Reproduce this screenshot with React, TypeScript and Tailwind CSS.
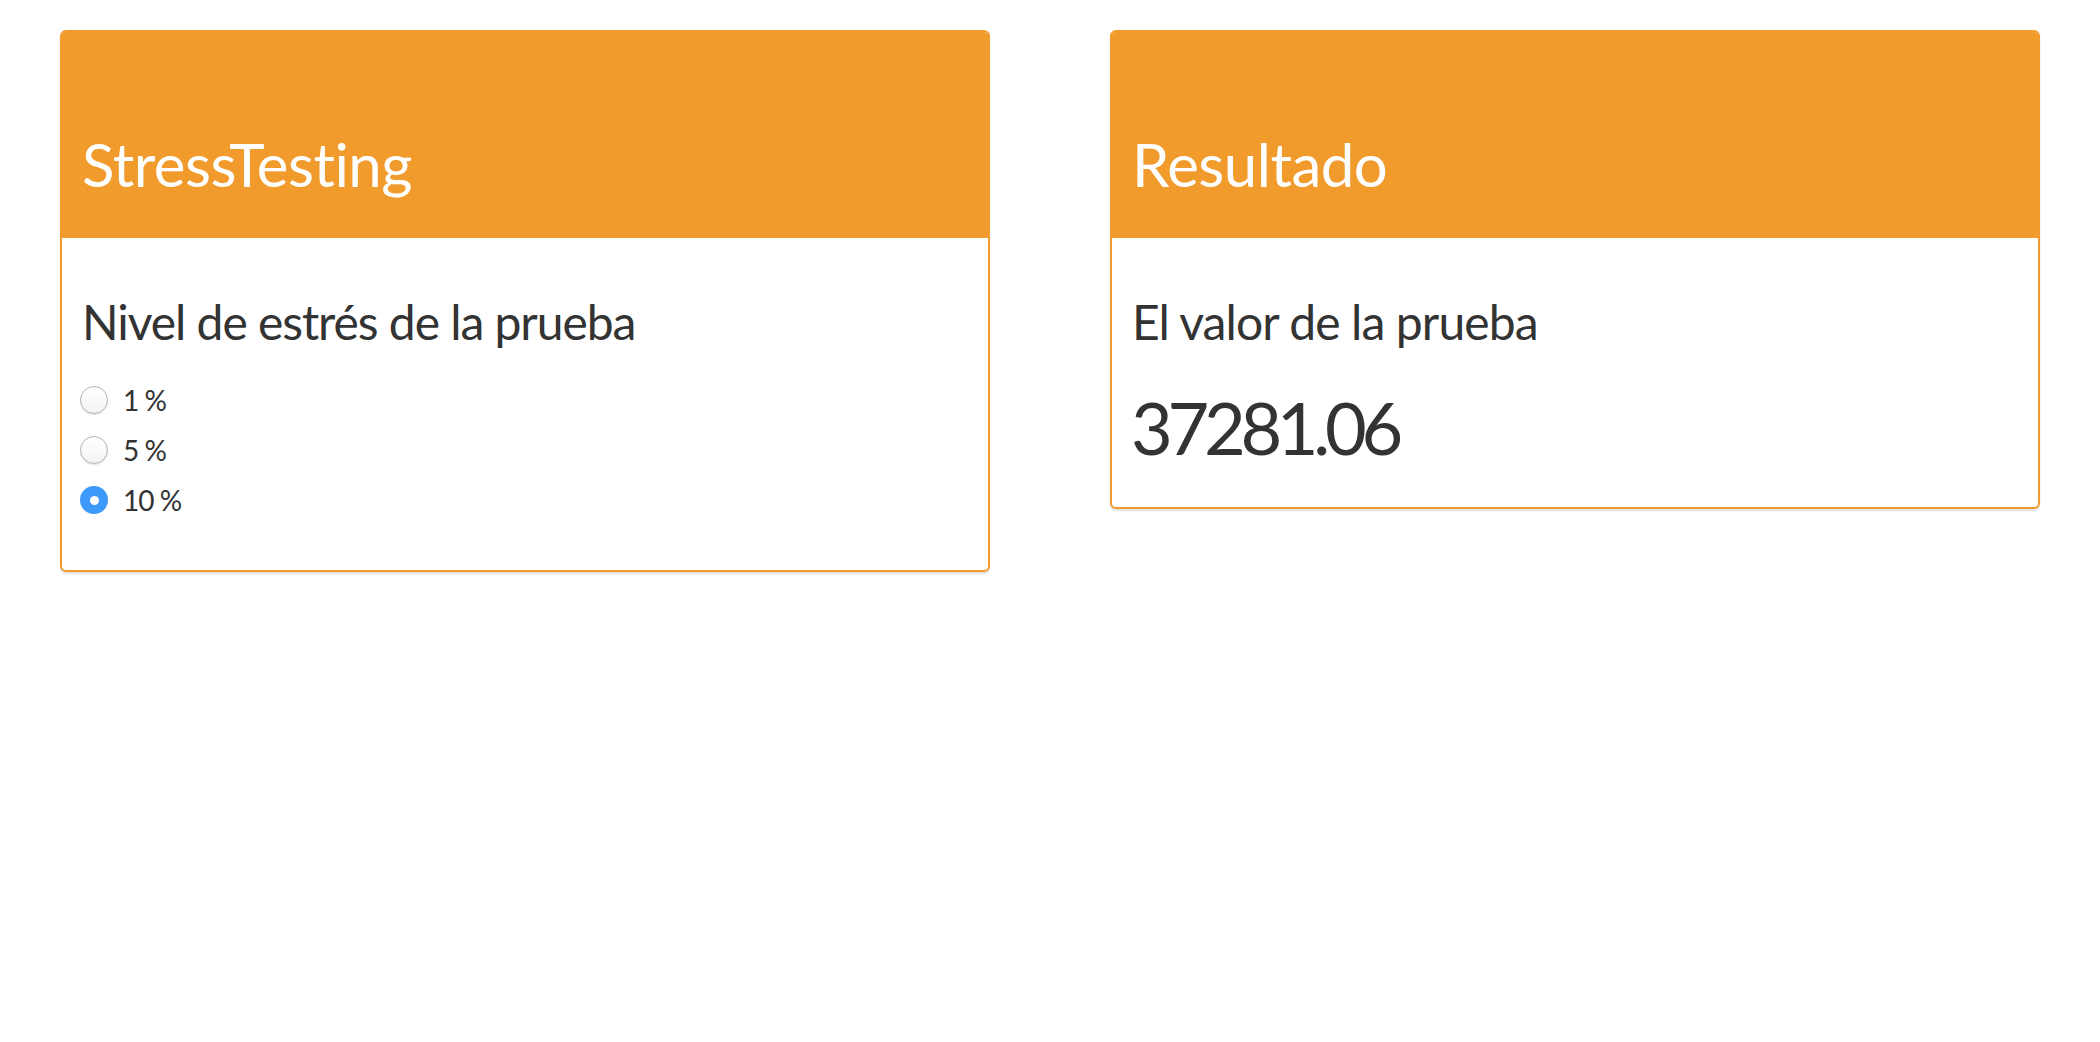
import { useState } from "react"

const levels = ["1 %", "5 %", "10 %"]

function Box({ title, children, pb }: { title: string; children: React.ReactNode; pb: string }) {
	return (
		<div className="w-[930px] rounded-[6px] border-2 border-[#f19b2c] bg-white shadow-[0_2px_2px_rgba(0,0,0,0.12)] overflow-hidden">
			<div className="h-[206px] bg-[#f19b2c] flex items-end px-[20px] pb-[44px]">
				<h2 className="text-[60px] leading-[60px] tracking-[-0.5px] text-white">{title}</h2>
			</div>
			<div className={`px-[20px] pt-[58px] ${pb}`}>{children}</div>
		</div>
	)
}

function Radio({ checked }: { checked: boolean }) {
	if (checked) {
		return (
			<span className="w-[28px] h-[28px] rounded-full bg-[#3d99fa] flex items-center justify-center">
				<span className="w-[9px] h-[9px] rounded-full bg-white" />
			</span>
		)
	}
	return (
		<span className="w-[28px] h-[28px] rounded-full border border-[#b3b3b3] bg-gradient-to-b from-white to-[#f4f4f4] shadow-[0_1px_1px_rgba(0,0,0,0.12)]" />
	)
}

export default function App() {
	const [level, setLevel] = useState(2)

	return (
		<div className="min-h-screen bg-white font-[Lato,sans-serif] text-[#333]">
			<div className="flex items-start gap-[120px] px-[60px] pt-[30px]">
				<Box title="StressTesting" pb="pb-[45px]">
					<h3 className="text-[48px] leading-[52px] tracking-[-1.05px]">Nivel de estrés de la prueba</h3>
					<div className="mt-[27px] -ml-[2px]">
						{levels.map((l, i) => (
							<label key={l} className="h-[50px] flex items-center gap-[15px] cursor-pointer" onClick={() => setLevel(i)}>
								<Radio checked={level === i} />
								<span className="text-[28px] leading-[28px] tracking-[-1px]">{l}</span>
							</label>
						))}
					</div>
				</Box>
				<Box title="Resultado" pb="pb-[40px]">
					<h3 className="text-[48px] leading-[52px] tracking-[-0.9px]">El valor de la prueba</h3>
					<div className="mt-[40px] text-[72px] leading-[79px] tracking-[-5.3px] -ml-[1px]">37281.06</div>
				</Box>
			</div>
		</div>
	)
}
